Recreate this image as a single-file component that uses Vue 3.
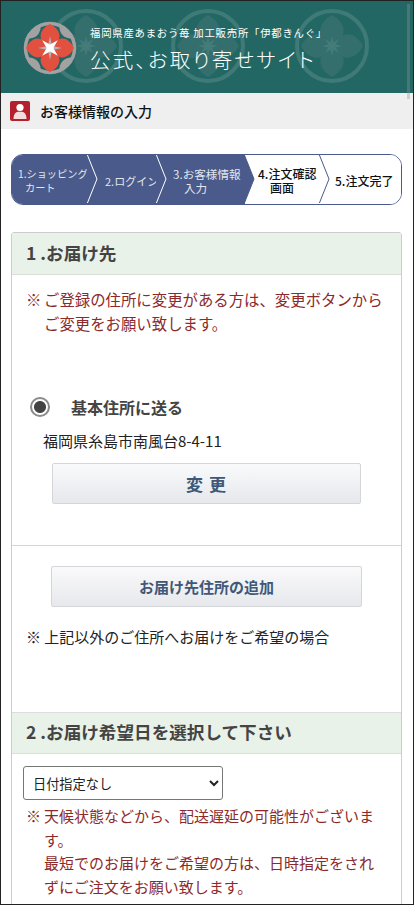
<script setup>
const steps = [
  { l: ['1.ショッピング', 'カート'], w: 76, pad: 6, ind: 7, fs: 10.2, on: true, line: '#fff' },
  { l: ['2.ログイン'], w: 69, pad: 17, ind: 0, fs: 11, on: true, line: '#fff' },
  { l: ['3.お客様情報', '入力'], w: 88, pad: 16, ind: 11, fs: 11.6, on: true, line: '#4a5a8a' },
  { l: ['4.注文確認', '画面'], w: 75, pad: 13, ind: 12, fs: 12, on: false, line: '#4a5a8a' },
  { l: ['5.注文完了'], w: 82, pad: 15, ind: 0, fs: 12, on: false, line: '#4a5a8a' }
]
const crests = [85, 207, 331]
const rots = [0, 90, 180, 270]
</script>

<template>
  <div class="frame">
    <header class="hero">
      <svg class="crests" viewBox="0 0 408 92" aria-hidden="true">
        <g v-for="x in crests" :key="x" :transform="`translate(${x} 45)`">
          <circle r="35" fill="none" stroke="#3f7a77" stroke-width="4" />
          <path v-for="r in rots" :key="r" :transform="`rotate(${r})`" d="M0-31C16-22 15-8 0 0C-15-8-16-22 0-31Z" fill="#356f6d" />
          <path d="M0-10L2-2L10 0L2 2L0 10L-2 2L-10 0L-2-2Z" fill="#437c79" />
          <path transform="rotate(45)" d="M0-10L2-2L10 0L2 2L0 10L-2 2L-10 0L-2-2Z" fill="#437c79" />
        </g>
        <g transform="translate(49 47)">
          <circle r="24.5" fill="#236765" stroke="#a3a1a1" stroke-width="3.5" />
          <path v-for="r in [45, 135, 225, 315]" :key="r" :transform="`rotate(${r})`" d="M-11-24Q0-12 11-24Z" fill="#a3a1a1" />
          <path v-for="r in rots" :key="r" :transform="`rotate(${r})`" d="M0-24C12-18 13-7 0 0C-13-7-12-18 0-24Z" fill="#e2503f" />
          <path d="M0-12L2-2L12 0L2 2L0 12L-2 2L-12 0L-2-2Z" fill="#b4b4b4" />
          <path transform="rotate(45)" d="M0-11L2.4-2.4L11 0L2.4 2.4L0 11L-2.4 2.4L-11 0L-2.4-2.4Z" fill="#fff" />
        </g>
      </svg>
      <div class="hero-text">
        <p class="hero-sub">福岡県産あまおう苺 加工販売所「伊都きんぐ」</p>
        <p class="hero-main">公式、お取り寄せサイト</p>
      </div>
      <span class="edge"></span>
    </header>

    <div class="title-bar">
      <span class="user-icon">
        <svg viewBox="0 0 20 20" width="20" height="20" aria-hidden="true">
          <rect width="20" height="20" rx="2" fill="#b5202d" />
          <circle cx="10" cy="6.5" r="3.6" fill="#fff" />
          <path d="M3.5 18c0-5 2.5-7 4.5-7.2h4c2 .2 4.5 2.2 4.5 7.2z" fill="#f5dcdc" />
        </svg>
      </span>
      <h1>お客様情報の入力</h1>
    </div>

    <ol class="steps">
      <li
        v-for="(s, i) in steps"
        :key="i"
        class="step"
        :class="{ on: s.on }"
        :style="{ width: s.w + 'px', paddingLeft: s.pad + 'px', fontSize: s.fs + 'px' }"
      >
        <span v-for="(t, j) in s.l" :key="t" :style="{ paddingLeft: (j ? s.ind : 0) + 'px' }">{{ t }}</span>
        <svg v-if="i < 4" class="chev" viewBox="0 0 12 48" preserveAspectRatio="none" aria-hidden="true">
          <path d="M0 -1L10 24L0 49" :fill="s.on ? '#4a5a8a' : '#fff'" :stroke="s.line" stroke-width="1" />
        </svg>
      </li>
    </ol>

    <section class="panel">
      <h2 class="panel-head">1 .お届け先</h2>
      <div class="note first">
        <span class="mark">※</span>
        <p class="note-body">ご登録の住所に変更がある方は、変更ボタンから<br>ご変更をお願い致します。</p>
      </div>

      <label class="radio-row">
        <input type="radio" checked name="addr" />
        <span>基本住所に送る</span>
      </label>
      <p class="address">福岡県糸島市南風台8-4-11</p>
      <button type="button" class="btn change">変 更</button>

      <hr class="rule" />

      <button type="button" class="btn add">お届け先住所の追加</button>
      <p class="extra">※ 上記以外のご住所へお届けをご希望の場合</p>

      <h2 class="panel-head second">2 .お届け希望日を選択して下さい</h2>
      <select class="date"><option>日付指定なし</option></select>
      <div class="note">
        <span class="mark">※</span>
        <p class="note-body">天候状態などから、配送遅延の可能性がございます。<br>最短でのお届けをご希望の方は、日時指定をされずにご注文をお願い致します。</p>
      </div>
    </section>
  </div>
</template>

<style>
html, body { margin: 0; height: 905px; overflow: hidden; background: #fff; }
</style>

<style scoped>
* { box-sizing: border-box; }
.frame {
  width: 414px;
  height: 905px;
  overflow: hidden;
  border: 1px solid #222;
  background: #fff;
  font-family: "Noto Sans CJK JP", "Liberation Sans", sans-serif;
  color: #333;
}
.hero {
  position: relative;
  height: 92px;
  background: #236765;
  color: #fff;
  display: flex;
  padding-left: 89px;
}
.crests { position: absolute; left: 0; top: 0; width: 408px; height: 92px; }
.hero-text { position: relative; padding-top: 24px; }
.hero-sub {
  margin: 0;
  font: 400 10.4px/15px "Noto Sans CJK JP", sans-serif;
  white-space: nowrap;
  letter-spacing: .75px;
}
.hero-main {
  margin: 4px 0 0;
  font: 300 20.5px/30px "Noto Sans CJK JP", sans-serif;
  white-space: nowrap;
  font-feature-settings: "palt";
  letter-spacing: 2.2px;
}
.edge {
  position: absolute;
  left: 406px;
  top: 3px;
  width: 3px;
  height: 95px;
  background: rgba(150, 150, 150, .35);
  z-index: 1;
}
.title-bar {
  height: 36px;
  background: #efefef;
  display: flex;
  align-items: center;
  padding-left: 9px;
  gap: 10px;
}
.user-icon { width: 20px; height: 20px; display: block; }
.title-bar h1 { margin: 0; font-size: 14px; font-weight: 500; color: #111; }
.steps {
  list-style: none;
  margin: 25px 0 0 10px;
  padding: 0;
  height: 51px;
  width: 391px;
  display: flex;
  border: 1.5px solid #4a5a8a;
  border-radius: 12px;
  overflow: hidden;
}
.step {
  position: relative;
  flex: none;
  display: flex;
  flex-direction: column;
  align-items: flex-start;
  justify-content: center;
  padding-top: 3px;
  line-height: 14px;
  font-weight: 500;
  color: #111;
  background: #fff;
  white-space: nowrap;
}
.step.on { background: #4a5a8a; color: #e3e6ee; font-weight: 400; }
.chev { position: absolute; right: -11px; top: 0; width: 12px; height: 48px; z-index: 1; }
.panel {
  margin: 27px 0 0 10px;
  width: 391px;
  height: 700px;
  border: 1px solid #ccc;
  border-radius: 3px 3px 0 0;
}
.panel-head {
  margin: 0;
  height: 42px;
  padding-left: 14px;
  background: #e9f2e8;
  border-bottom: 1px solid #ddd;
  font-size: 17.6px;
  line-height: 40px;
  font-weight: 700;
  color: #444;
}
.note { display: flex; margin: 4px 14px 0; color: #8c2a2a; font-size: 15px; line-height: 23.5px; }
.note.first { margin-top: 13px; margin-right: 0; font-size: 15.4px; }
.mark { flex: none; width: 18px; }
.note-body { margin: 0; }
.radio-row {
  display: flex;
  align-items: center;
  margin: 57px 0 0 18px;
  height: 30px;
  font-size: 16px;
  font-weight: 700;
  color: #444;
}
.radio-row input {
  appearance: none;
  margin: 0 21px 0 0;
  width: 20px;
  height: 20px;
  border-radius: 50%;
  border: 2px solid #8a8a8a;
  background: radial-gradient(circle, #444 0 5.5px, #fff 6.5px);
}
.address { margin: 8px 0 0 31px; font-size: 15px; line-height: 22px; color: #222; }
.btn {
  display: block;
  height: 41px;
  border: 1px solid #d4d6da;
  border-radius: 2px;
  background: linear-gradient(#fafafb, #e6e8ec);
  color: #3f5878;
  font-family: inherit;
  font-weight: 700;
  padding: 0;
}
.change { width: 309px; margin: 11px 0 0 40px; font-size: 17px; letter-spacing: 1px; }
.rule { margin: 41px 0 0; border: 0; border-top: 1px solid #d5d5d5; }
.add { width: 311px; margin: 20px 0 0 39px; font-size: 15px; }
.extra { margin: 18px 0 0 14px; font-size: 15px; line-height: 24px; color: #222; }
.second { margin-top: 63px; height: 42px; border-top: 1px solid #ddd; line-height: 38px; }
.date {
  display: block;
  width: 200px;
  height: 34px;
  margin: 12px 0 0 11px;
  padding-left: 5px;
  font-family: inherit;
  font-size: 13.2px;
  background: #fff;
  color: #222;
  border: 1px solid #767676;
  border-radius: 3px;
}
</style>
